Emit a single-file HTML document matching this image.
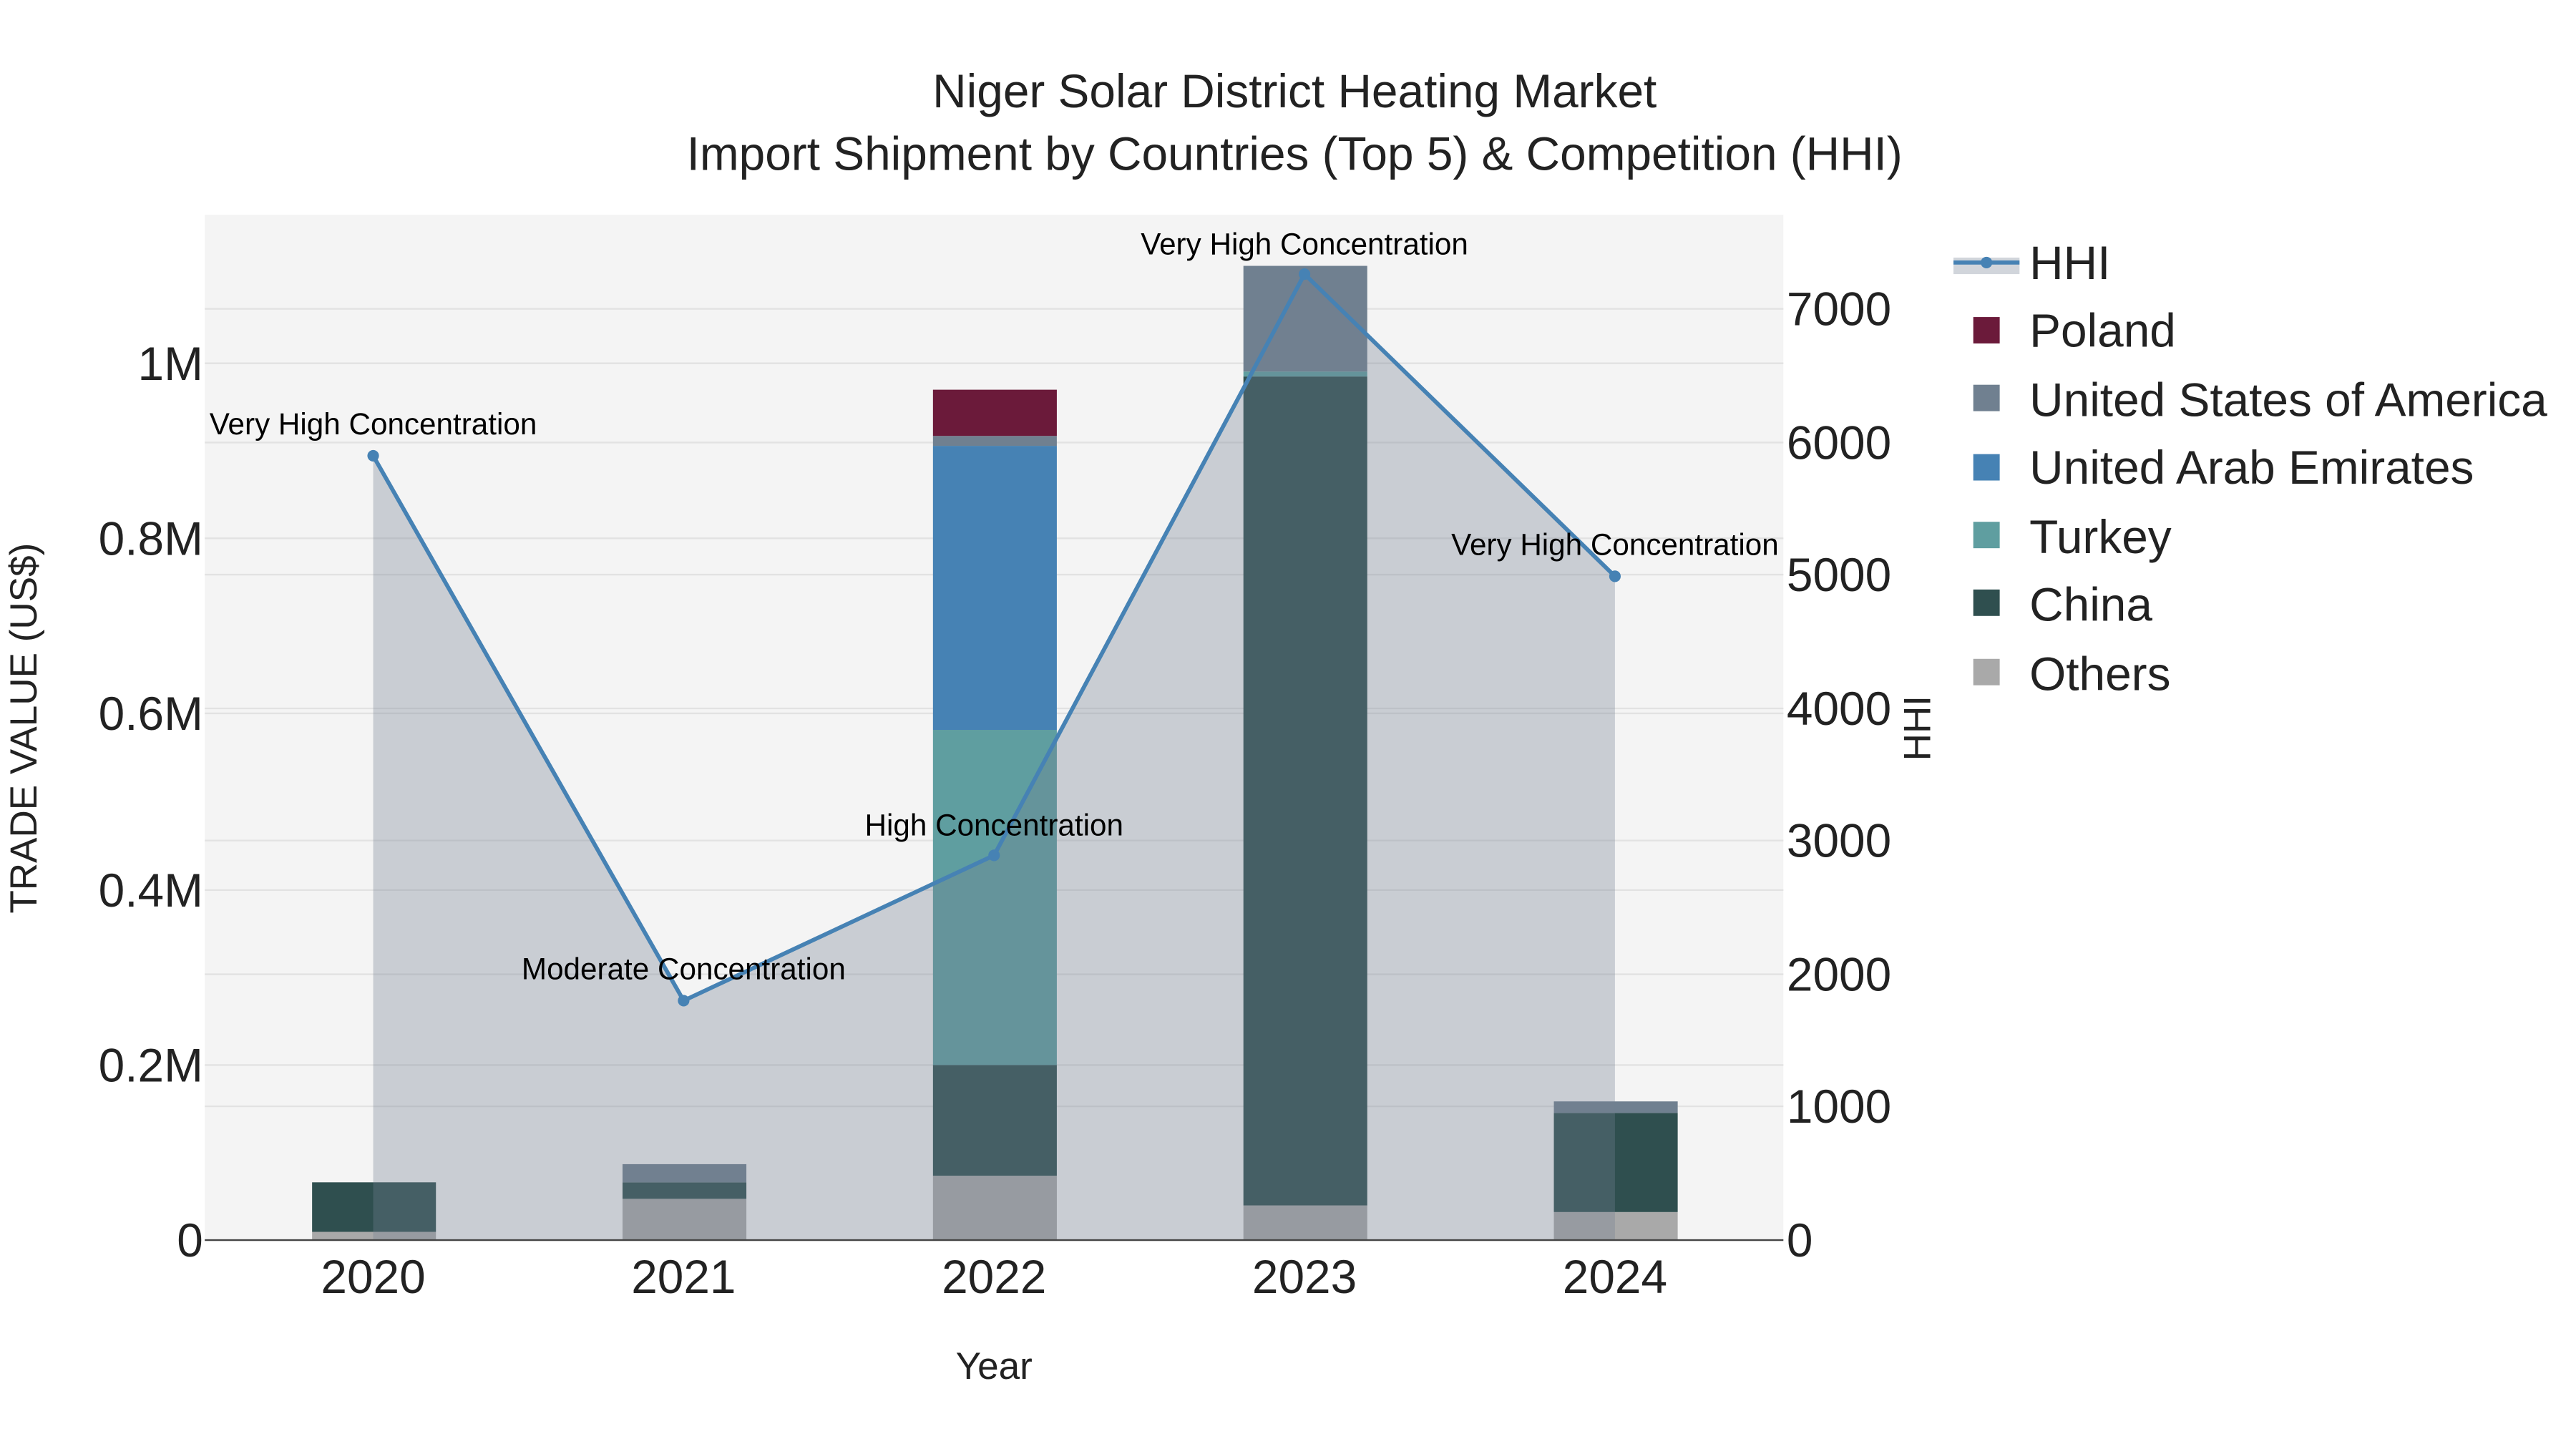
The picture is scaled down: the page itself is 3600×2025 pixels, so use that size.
<!DOCTYPE html>
<html><head><meta charset="utf-8"><style>
html,body{margin:0;padding:0;background:#fff;}
svg{display:block;}
text{font-family:"Liberation Sans",sans-serif;}
</style></head><body>
<svg width="3600" height="2025" viewBox="0 0 1560 877.5" xmlns="http://www.w3.org/2000/svg">
<rect x="0" y="0" width="1560" height="877.5" fill="#fff"/>
<rect x="124" y="130" width="956" height="621" fill="#f4f4f4"/>
<g stroke="#e2e2e2" stroke-width="1">
<line x1="124" x2="1080" y1="645" y2="645"/><line x1="124" x2="1080" y1="539" y2="539"/>
<line x1="124" x2="1080" y1="432" y2="432"/><line x1="124" x2="1080" y1="326" y2="326"/>
<line x1="124" x2="1080" y1="220" y2="220"/>
<line x1="124" x2="1080" y1="670" y2="670"/><line x1="124" x2="1080" y1="590" y2="590"/>
<line x1="124" x2="1080" y1="509" y2="509"/><line x1="124" x2="1080" y1="429" y2="429"/>
<line x1="124" x2="1080" y1="348" y2="348"/><line x1="124" x2="1080" y1="268" y2="268"/>
<line x1="124" x2="1080" y1="187" y2="187"/>
</g>
<g>
<rect x="189" y="746" width="75" height="5" fill="#a9a9a9"/>
<rect x="189" y="716" width="75" height="30" fill="#2f4f4f"/>
<rect x="377" y="726" width="75" height="25" fill="#a9a9a9"/>
<rect x="377" y="716" width="75" height="10" fill="#2f4f4f"/>
<rect x="377" y="705" width="75" height="11" fill="#708090"/>
<rect x="565" y="712" width="75" height="39" fill="#a9a9a9"/>
<rect x="565" y="645" width="75" height="67" fill="#2f4f4f"/>
<rect x="565" y="442" width="75" height="203" fill="#5f9ea0"/>
<rect x="565" y="270" width="75" height="172" fill="#4682b4"/>
<rect x="565" y="264" width="75" height="6" fill="#708090"/>
<rect x="565" y="236" width="75" height="28" fill="#6b1a3a"/>
<rect x="753" y="730" width="75" height="21" fill="#a9a9a9"/>
<rect x="753" y="228" width="75" height="502" fill="#2f4f4f"/>
<rect x="753" y="225" width="75" height="3" fill="#5f9ea0"/>
<rect x="753" y="161" width="75" height="64" fill="#708090"/>
<rect x="941" y="734" width="75" height="17" fill="#a9a9a9"/>
<rect x="941" y="674" width="75" height="60" fill="#2f4f4f"/>
<rect x="941" y="667" width="75" height="7" fill="#708090"/>
</g>
<polygon points="226,751 226,276 414,606 602,518 790,166 978,349 978,751" fill="rgb(115,127,145)" fill-opacity="0.33"/>
<polyline points="226,276 414,606 602,518 790,166 978,349" fill="none" stroke="#4682b4" stroke-width="2.5"/>
<g fill="#4682b4"><circle cx="226" cy="276" r="3.5"/><circle cx="414" cy="606" r="3.5"/><circle cx="602" cy="518" r="3.5"/><circle cx="790" cy="166" r="3.5"/><circle cx="978" cy="349" r="3.5"/></g>
<line x1="124" x2="1080" y1="751" y2="751" stroke="#444" stroke-width="1"/>
<g font-size="18.3" fill="#000" text-anchor="middle">
<text x="226" y="263">Very High Concentration</text>
<text x="414" y="593">Moderate Concentration</text>
<text x="602" y="506">High Concentration</text>
<text x="790" y="154">Very High Concentration</text>
<text x="978" y="336">Very High Concentration</text>
</g>
<g text-anchor="middle" fill="#222" font-size="28.5">
<text x="784" y="65">Niger Solar District Heating Market</text>
<text x="784" y="103">Import Shipment by Countries (Top 5) &amp; Competition (HHI)</text>
</g>
<g text-anchor="end" font-size="28.5" fill="#222">
<text x="123" y="761">0</text><text x="123" y="655">0.2M</text><text x="123" y="549">0.4M</text>
<text x="123" y="442">0.6M</text><text x="123" y="336">0.8M</text><text x="123" y="230">1M</text>
</g>
<g text-anchor="start" font-size="28.5" fill="#222">
<text x="1082" y="761">0</text><text x="1082" y="680">1000</text><text x="1082" y="600">2000</text>
<text x="1082" y="519">3000</text><text x="1082" y="439">4000</text><text x="1082" y="358">5000</text>
<text x="1082" y="278">6000</text><text x="1082" y="197">7000</text>
</g>
<g text-anchor="middle" font-size="28.5" fill="#222">
<text x="226" y="783">2020</text><text x="414" y="783">2021</text><text x="602" y="783">2022</text>
<text x="790" y="783">2023</text><text x="978" y="783">2024</text>
</g>
<text x="602" y="835" text-anchor="middle" font-size="23" fill="#222">Year</text>
<text transform="translate(22,441) rotate(-90)" text-anchor="middle" font-size="23" fill="#222">TRADE VALUE (US$)</text>
<text transform="translate(1169,441) rotate(-90)" text-anchor="middle" font-size="23" fill="#222">HHI</text>
<rect x="1183" y="156" width="40" height="10" fill="rgb(115,127,145)" fill-opacity="0.33"/>
<line x1="1183" x2="1223" y1="159" y2="159" stroke="#4682b4" stroke-width="2.5"/>
<circle cx="1203" cy="159" r="3.5" fill="#4682b4"/>
<g>
<rect x="1195" y="192" width="16" height="16" fill="#6b1a3a"/>
<rect x="1195" y="233" width="16" height="16" fill="#708090"/>
<rect x="1195" y="275" width="16" height="16" fill="#4682b4"/>
<rect x="1195" y="316" width="16" height="16" fill="#5f9ea0"/>
<rect x="1195" y="357" width="16" height="16" fill="#2f4f4f"/>
<rect x="1195" y="399" width="16" height="16" fill="#a9a9a9"/>
</g>
<g font-size="28.5" fill="#222">
<text x="1229" y="169">HHI</text>
<text x="1229" y="210">Poland</text>
<text x="1229" y="252">United States of America</text>
<text x="1229" y="293">United Arab Emirates</text>
<text x="1229" y="335">Turkey</text>
<text x="1229" y="376">China</text>
<text x="1229" y="418">Others</text>
</g>
</svg>
</body></html>
